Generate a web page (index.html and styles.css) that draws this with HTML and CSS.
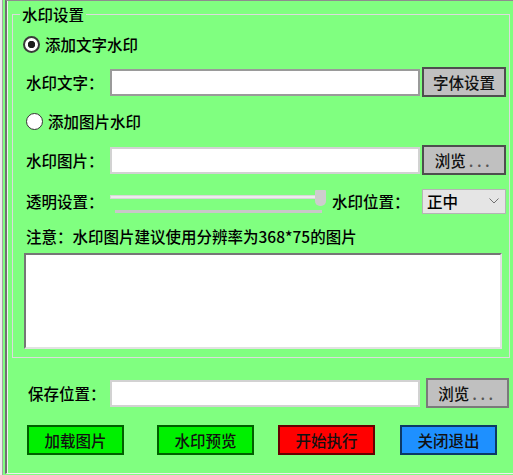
FILE: index.html
```html
<!DOCTYPE html>
<html lang="zh-CN">
<head>
<meta charset="utf-8">
<title>水印设置</title>
<link rel="stylesheet" href="styles.css">
</head>
<body>
<div class="win">
  <div class="win-in">
    <div class="panel">
      <fieldset class="group">
        <legend class="group-title">水印设置</legend>
        <div class="radio-row r1"><span class="radio checked"></span><span class="radio-text">添加文字水印</span></div>
        <div class="field-row row-text">
          <span class="label">水印文字：</span>
          <input class="text-input dark" type="text">
          <button class="btn gray focus">字体设置</button>
        </div>
        <div class="radio-row r2"><span class="radio"></span><span class="radio-text">添加图片水印</span></div>
        <div class="field-row row-img">
          <span class="label">水印图片：</span>
          <input class="text-input" type="text">
          <button class="btn gray focus">浏览<span class="dots">...</span></button>
        </div>
        <div class="field-row row-opt">
          <span class="label">透明设置：</span>
          <div class="slider">
            <div class="track"></div>
            <div class="thumb"></div>
            <div class="ticks"></div>
          </div>
          <span class="label2">水印位置：</span>
          <div class="select">
            <span>正中</span>
            <svg class="chev" width="10" height="6" viewBox="0 0 10 6"><polyline points="0.5,0.5 5,5 9.5,0.5" fill="none" stroke="#707070" stroke-width="1"/></svg>
          </div>
        </div>
        <div class="note">注意：水印图片建议使用分辨率为368*75的图片</div>
        <textarea class="memo"></textarea>
      </fieldset>
      <div class="field-row save-row">
        <span class="label">保存位置：</span>
        <input class="text-input" type="text">
        <button class="btn gray plain">浏览<span class="dots">...</span></button>
      </div>
      <div class="actions">
        <button class="act green a1">加载图片</button>
        <button class="act green a2">水印预览</button>
        <button class="act red a3">开始执行</button>
        <button class="act blue a4">关闭退出</button>
      </div>
    </div>
  </div>
</div>
</body>
</html>
```
FILE: styles.css
```css
* { box-sizing: border-box; }
html, body {
  margin: 0;
  padding: 0;
  background: #80ff80;
  width: 513px;
  height: 475px;
  overflow: hidden;
}
body, input, button, textarea {
  font-family: "Noto Sans CJK SC", "Microsoft YaHei", sans-serif;
  font-size: 15.5px;
  font-weight: 500;
  color: #000;
}
.win {
  height: 475px;
  border-left: 2px solid #ececec;
  display: flex;
}
.win-in {
  flex: 1;
  display: flex;
  border-left: 1px solid #a4a4a4;
  padding-left: 2px;
}
.panel {
  flex: 1;
  height: 474px;
  border-left: 2px solid #707070;
  border-top: 1px solid #8e8e8e;
  border-bottom: 1px solid #eeeeee;
  padding-left: 1px;
  box-shadow: inset 1px 0 0 #f2f2f2;
}
.group {
  margin: 3px 3px 0 4px;
  padding: 0 3px 8px 0;
  border: 1px solid #dcdcdc;
  min-inline-size: 0;
}
.group-title {
  margin-left: 7px;
  padding: 0 2px;
  line-height: 20px;
  height: 20px;
}
.radio-row {
  display: flex;
  align-items: center;
  height: 20px;
}
.r1 { margin-top: 10px; margin-left: 10px; }
.r2 { margin-top: 14px; margin-left: 13px; }
.radio {
  width: 17px;
  height: 17px;
  border-radius: 50%;
  border: 1px solid #333;
  background: #fff;
  margin-right: 5px;
  flex: none;
}
.radio.checked {
  border: 2px solid #3a3a3a;
  background: radial-gradient(circle, #1e1e1e 0 3.4px, #fff 4px);
}
.radio-text { line-height: 20px; }
.field-row {
  display: flex;
  align-items: center;
  height: 30px;
  padding-left: 13px;
}
.row-text { margin-top: 13px; }
.row-img { margin-top: 14px; }
.row-opt { margin-top: 13px; height: 26px; }
.label {
  width: 84px;
  flex: none;
  line-height: 20px;
}
.text-input {
  width: 310px;
  height: 27px;
  border: 2px solid #d2d2d2;
  background: #fff;
  padding: 0 3px;
  outline: none;
  margin: 0;
}
.text-input.dark { border-color: #9a9a9a; }
.btn {
  margin: 0 0 0 2px;
  width: 84px;
  height: 30px;
  padding: 0;
  background: #c0c0c0;
  border: 2px solid #4e4e4e;
  line-height: 20px;
  color: #111;
}
.btn.plain { border-color: #7a7a7a; width: 83px; margin-left: 6px; }
.dots {
  letter-spacing: 3.5px;
  color: #555;
  margin-left: 3px;
}
.slider {
  position: relative;
  width: 216px;
  height: 26px;
  flex: none;
}
.track {
  margin-top: 7px;
  width: 207px;
  height: 4px;
  background: #ececec;
  border: 1px solid #d8d8d8;
}
.thumb {
  position: absolute;
  left: 205px;
  top: 2px;
  width: 11px;
  height: 16px;
  background: #cdcdcd;
  border-radius: 1px 1px 5px 5px;
}
.ticks {
  margin-top: 11px;
  margin-left: 5px;
  width: 207px;
  height: 3px;
  background: #c8c8c8;
}
.label2 {
  margin-left: 6px;
  width: 90px;
  flex: none;
  line-height: 20px;
}
.select {
  width: 84px;
  height: 25px;
  flex: none;
  background: #e5e5e5;
  border: 1px solid #b4b4b4;
  display: flex;
  align-items: center;
  justify-content: space-between;
  padding: 0 6px 0 4px;
  line-height: 20px;
}
.note {
  margin-top: 12px;
  padding-left: 13px;
  height: 20px;
  line-height: 20px;
  white-space: nowrap;
}
.memo {
  display: block;
  margin: 7px 0 0 11px;
  width: 478px;
  height: 96px;
  resize: none;
  background: #fff;
  border-top: 2px solid #767676;
  border-left: 2px solid #767676;
  border-right: 2px solid #e2e2e2;
  border-bottom: 2px solid #e2e2e2;
  outline: none;
  padding: 0;
}
.save-row {
  margin-top: 20px;
  padding-left: 20px;
}
.save-row .label { width: 82px; }
.actions {
  margin-top: 17px;
  display: flex;
  height: 30px;
}
.act {
  width: 97px;
  height: 30px;
  margin: 0;
  padding: 0;
  border: 2px solid rgba(0, 0, 0, 0.6);
  line-height: 20px;
  color: #111;
}
.green { background: #00f000; }
.red { background: #ff0000; }
.blue { background: #1e90ff; }
.a1 { margin-left: 19px; }
.a2 { margin-left: 33px; }
.a3 { margin-left: 24px; }
.a4 { margin-left: 25px; }
```
